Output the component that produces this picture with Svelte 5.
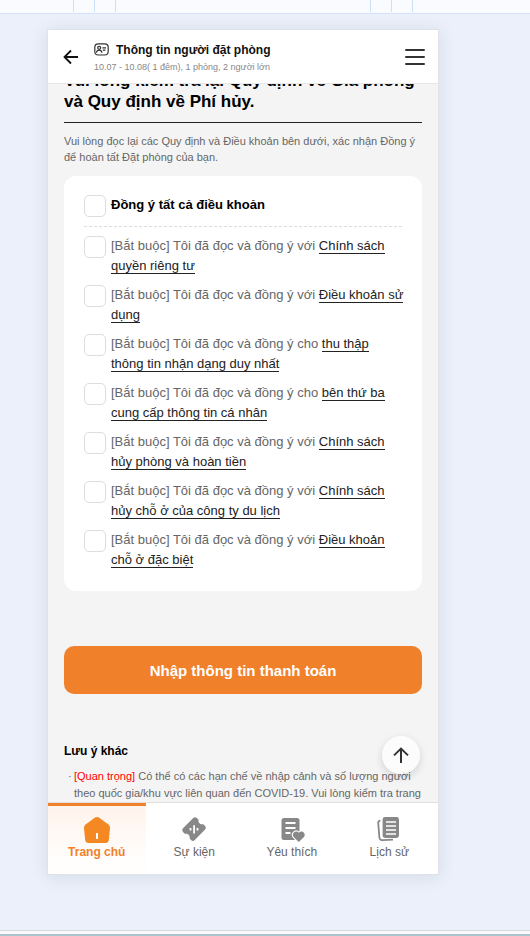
<script>
  // Booking confirmation step, shown inside a device preview frame.
  import { onMount } from 'svelte'

  const SCROLL_START = 31

  const terms = [
    { text: '[Bắt buộc] Tôi đã đọc và đồng ý với', link: 'Chính sách quyền riêng tư' },
    { text: '[Bắt buộc] Tôi đã đọc và đồng ý với', link: 'Điều khoản sử dụng' },
    { text: '[Bắt buộc] Tôi đã đọc và đồng ý cho', link: 'thu thập thông tin nhận dạng duy nhất' },
    { text: '[Bắt buộc] Tôi đã đọc và đồng ý cho', link: 'bên thứ ba cung cấp thông tin cá nhân' },
    { text: '[Bắt buộc] Tôi đã đọc và đồng ý với', link: 'Chính sách hủy phòng và hoàn tiền' },
    { text: '[Bắt buộc] Tôi đã đọc và đồng ý với', link: 'Chính sách hủy chỗ ở của công ty du lịch' },
    { text: '[Bắt buộc] Tôi đã đọc và đồng ý với', link: 'Điều khoản chỗ ở đặc biệt' },
  ]
  const tabs = [
    { id: 'home', label: 'Trang chủ' },
    { id: 'event', label: 'Sự kiện' },
    { id: 'wish', label: 'Yêu thích' },
    { id: 'history', label: 'Lịch sử' },
  ]

  let checked = $state(terms.map(() => false))
  let all = $derived(checked.every(Boolean))
  let active = $state('home')
  let scroller

  function toggleAll(e) { checked = terms.map(() => e.currentTarget.checked) }
  function toTop() { scroller.scrollTo({ top: 0, behavior: 'smooth' }) }

  onMount(() => { scroller.scrollTop = SCROLL_START })
</script>

<div class="page">
  <div class="ruler">
    <div class="ticks"><i></i><i></i><i></i></div>
    <div class="ticks"><i></i><i></i><i></i></div>
  </div>

  <div class="stage">
    <div class="phone">
      <header>
        <button class="icon-btn" aria-label="Quay lại">
          <svg width="16" height="16" viewBox="0 0 16 16" fill="none" stroke="#111" stroke-width="1.8">
            <path d="M15 8H2M8 1.5 1.5 8 8 14.5" />
          </svg>
        </button>
        <div class="heading">
          <h1>
            <svg width="15" height="13" viewBox="0 0 15 13" fill="none" stroke="#333" stroke-width="1.2">
              <path d="M4.4.8H10.6C13.4.8 14.2 2.2 14.2 4.4V8.2C14.2 10.8 13.2 12 10.6 12H4.4C1.8 12 .8 10.8 .8 8.2V4.4C.8 2.2 1.8.8 4.4.8Z" />
              <circle cx="5.2" cy="4.8" r="1.5" />
              <path d="M2.4 9.6C3 6.4 7.2 6.4 8 9.6M8.4 4.8H12M8.8 7.2H11.4" />
            </svg>
            Thông tin người đặt phòng
          </h1>
          <p>10.07 - 10.08( 1 đêm), 1 phòng, 2 người lớn</p>
        </div>
        <button class="icon-btn" aria-label="Menu">
          <svg width="20" height="16" viewBox="0 0 20 16" stroke="#333" stroke-width="2" stroke-linecap="round">
            <path d="M1 1H19M1 8H19M1 15H19" />
          </svg>
        </button>
      </header>

      <div class="body">
        <main bind:this={scroller}>
          <h2>Vui lòng kiểm tra lại Quy định về Giá phòng và Quy định về Phí hủy.</h2>
          <p class="intro">Vui lòng đọc lại các Quy định và Điều khoản bên dưới, xác nhận Đồng ý để hoàn tất Đặt phòng của bạn.</p>

          <section class="card">
            <div class="row all">
              <input type="checkbox" id="agree-all" checked={all} onchange={toggleAll} />
              <label for="agree-all">Đồng ý tất cả điều khoản</label>
            </div>
            <div class="terms">
              {#each terms as term, i}
                <div class="row">
                  <input type="checkbox" id="term-{i}" bind:checked={checked[i]} />
                  <p><label for="term-{i}">{term.text}</label> <a href="#term-{i}">{term.link}</a></p>
                </div>
              {/each}
            </div>
          </section>

          <button class="submit">Nhập thông tin thanh toán</button>

          <section class="notes">
            <h3>Lưu ý khác</h3>
            <ul>
              <li><em>[Quan trọng]</em> Có thể có các hạn chế về nhập cảnh và số lượng người theo quốc gia/khu vực liên quan đến COVID-19. Vui lòng kiểm tra trang</li>
            </ul>
          </section>
        </main>

        <button class="to-top" aria-label="Lên đầu trang" onclick={toTop}>
          <svg width="16" height="16" viewBox="0 0 16 16" fill="none" stroke="#333" stroke-width="2">
            <path d="M8 16V2M1 8.4 8 1.6 15 8.4" />
          </svg>
        </button>
      </div>

      <nav>
        {#each tabs as tab}
          <a href="#{tab.id}" class:active={active === tab.id} onclick={() => (active = tab.id)}>
            <svg width="28" height="28" viewBox="0 0 28 28" fill="#888">
              {#if tab.id === 'home'}
                <path fill="#f48924" d="M12 1.6Q14 .4 16 1.6L25.4 8.4Q27.2 9.8 27 12L25.8 24Q25.4 27 22.4 27H5.6Q2.6 27 2.2 24L1 12Q.8 9.8 2.6 8.4Z" />
                <path fill="#fff" d="M13 17H15V23H13Z" />
              {:else if tab.id === 'event'}
                <path d="M13 2.2Q15 .4 17 2.2L18.6 3.8C17.8 6.4 20.4 9 23.2 8.2L25.1 10Q26.8 11.8 25.1 13.6L14.8 24Q13 25.8 11 24L9.6 22.6C10.4 19.6 8 17 4.8 17.8L3 16Q1.2 14 3 12.2Z" />
                <path fill="#fff" d="M13.2 9.2H15V17.4H13.2ZM9.6 12H11.4V14.4H9.6ZM16.6 12H18.4V14.4H16.6Z" />
              {:else if tab.id === 'wish'}
                <path d="M6 2H19Q21.5 2 21.5 4.5V21.5Q21.5 24 19 24H6Q3.5 24 3.5 21.5V4.5Q3.5 2 6 2Z" />
                <path fill="none" stroke="#fff" stroke-width="1.8" d="M7.5 7H17.5M7.5 12H17.5M7.5 17H12.5" />
                <path stroke="#fff" stroke-width="2" paint-order="stroke" d="M20.8 26 15.6 21C13 17.4 17.8 13.4 20.8 16.8C23.8 13.4 28.6 17.4 26 21Z" />
              {:else}
                <path d="M10 1H21.6Q24 1 24 3.4V19.6Q24 22 21.6 22H10Q7.6 22 7.6 19.6V3.4Q7.6 1 10 1Z" />
                <path fill="none" stroke="#fff" stroke-width="1.6" d="M11 6H21M11 10H21M11 14H21M11 18H21" />
                <path fill="none" stroke="#888" stroke-width="1.8" d="M5.4 4.6Q3 4.8 3.2 7L4.4 21.5Q4.8 24.6 8 24.2L18 23.6" />
              {/if}
            </svg>
            <span>{tab.label}</span>
          </a>
        {/each}
      </nav>
    </div>
  </div>

  <div class="edge"></div>
</div>

<style>
  :global(body) { background: #ebf0fa; font-family: 'Liberation Sans', Arial, sans-serif; color: #666; }
  h1, h2, h3, p, ul { margin: 0; padding: 0; }
  button { border: 0; padding: 0; background: none; font: inherit; cursor: pointer; }
  svg { display: block; flex: none; }

  .page { display: flex; flex-direction: column; height: 100vh; box-sizing: border-box; }
  .ruler { display: flex; gap: 254px; flex: none; height: 13px; padding-left: 73px; background: #f9fbff; border-bottom: 1px solid #d3e2f8; overflow: hidden; }
  .ticks { display: flex; gap: 20px; height: 12px; }
  .ticks i { width: 1px; background: #cfe0fa; }
  .stage { flex: 1; min-height: 0; padding: 15px 91px 55px 47px; }
  .edge { flex: none; height: 3px; background: #f9f9f9; border-top: 1px solid #d8d8e0; border-bottom: 2px solid #a9c3cf; }

  .phone { display: flex; flex-direction: column; height: 100%; box-sizing: border-box; border: 1px solid #dfe2e8; background: #f4f4f4; box-shadow: 0 2px 16px rgba(60, 80, 110, 0.12); }

  header { display: flex; align-items: center; flex: none; gap: 15px; height: 53px; padding: 0 13px 0 15px; background: #fff; border-bottom: 1px solid #e8e8e8; }
  .heading { flex: 1; min-width: 0; }
  h1 { display: flex; align-items: center; gap: 7px; color: #111; font-size: 12px; line-height: 20px; white-space: nowrap; }
  .heading p { color: #888; font-size: 9px; line-height: 14px; }

  .body { position: relative; flex: 1; min-height: 0; }
  main { height: 100%; box-sizing: border-box; padding: 17px 16px 0; overflow-y: auto; scrollbar-width: none; }
  h2 { padding-bottom: 10px; border-bottom: 1px solid #222; color: #000; font-size: 17px; line-height: 21px; }
  .intro { padding: 10px 0 11px; font-size: 11px; line-height: 16px; }

  .card { padding: 19px 20px 21px; border-radius: 12px; background: #fff; }
  .row { display: flex; gap: 5px; font-size: 13px; line-height: 20px; }
  .row p { flex: 1; min-width: 0; }
  .all { padding-bottom: 9px; border-bottom: 1px dashed #ddd; color: #000; font-weight: 700; }
  .terms { display: flex; flex-direction: column; gap: 9px; margin-right: -2px; padding-top: 9px; }
  .row a { color: #222; text-decoration: none; border-bottom: 1px solid #222; }
  input { appearance: none; flex: none; width: 22px; height: 22px; margin: 0; border: 1px solid #ddd; border-radius: 5px; background: #fff; }
  input:checked { background: #f28028; border-color: #f28028; }

  .submit { display: block; width: 100%; height: 48px; margin-top: 55px; border-radius: 10px; background: #f1802a; color: #fff; font-size: 15px; font-weight: 700; }

  .notes { padding: 48px 0 40px; }
  h3 { color: #000; font-size: 12px; line-height: 18px; }
  ul { padding-top: 8px; list-style: none; font-size: 11px; line-height: 17px; }
  li { display: block; padding-left: 10px; }
  li::before { content: '·'; float: left; margin-left: -6px; }
  em { color: #f00; font-style: normal; }

  .to-top { position: absolute; right: 18px; bottom: 28px; display: grid; place-items: center; width: 38px; height: 38px; border-radius: 50%; background: rgba(255, 255, 255, 0.7); box-shadow: 0 3px 8px rgba(0, 0, 0, 0.14); }

  nav { display: flex; flex: none; height: 71px; border-top: 1px solid #e0e0e0; background: #fff; }
  nav a { display: flex; flex: 1; flex-direction: column; align-items: center; border-top: 3px solid transparent; color: #666; font-size: 12px; line-height: 16px; text-decoration: none; padding-top: 10px; }
  nav a.active { border-top-color: #f1802a; background: linear-gradient(#fff3eb, #fffefd 80%); color: #f1802a; font-weight: 700; }
</style>
